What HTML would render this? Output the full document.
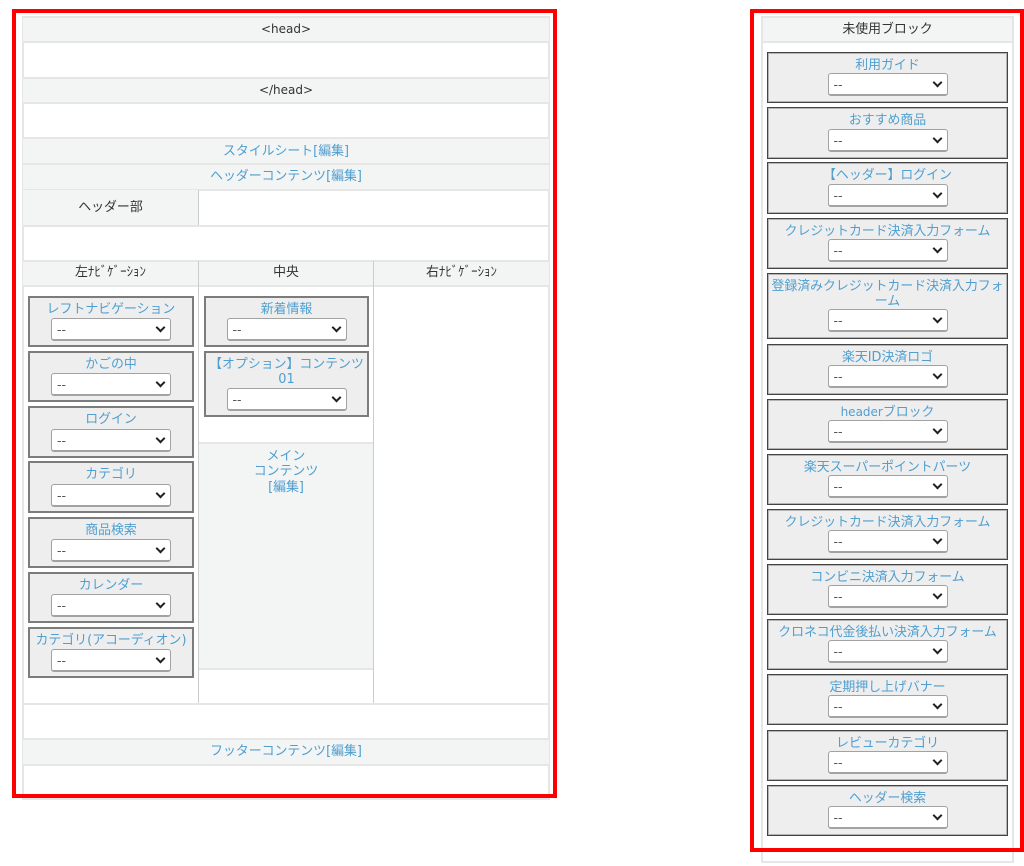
<!DOCTYPE html>
<html lang="ja"><head><meta charset="utf-8"><title>レイアウト</title>
<style>
html,body{margin:0;padding:0;background:#fff;width:1024px;height:866px;overflow:hidden}
body{position:relative;font:12.9px/15.4px "DejaVu Sans","Noto Sans CJK JP",sans-serif;color:#333;filter:blur(.3px)}
div{position:absolute;box-sizing:border-box}
.g{background:#f3f4f4;left:23px;width:526px;border-top:2px solid #e6e6e6;border-bottom:2px solid #e6e6e6;text-align:center}
a{color:#4f9fd0;text-decoration:none}
.v{width:1px;background:#ccc}
.h{height:2px;background:#e6e6e6}
.red{border:4px solid #f00}
.d{font-size:12px}
.b{background:#eee;border:2px solid #7c7c7c;text-align:center;line-height:15.4px;padding-top:4px}
.l{left:28px;width:166px}.c{left:204px;width:165px}.r{left:767px;width:241px;border:1px solid #444;box-shadow:inset 0 0 0 1px #b4b4b4;padding-top:5px}
.b a{display:block}
select{position:absolute;bottom:4px;left:50%;margin-left:-60px;width:120px;height:23px;font:12.5px "DejaVu Sans",sans-serif;background:#fff;color:#555;border:1px solid #a2a2a2;border-bottom-width:2px;border-radius:3px;padding:0 0 0 5px;appearance:none;-webkit-appearance:none}
.r select{bottom:6px}
.b::after{content:"";position:absolute;left:50%;margin-left:46px;bottom:14px;width:5px;height:5px;border-right:2px solid #222;border-bottom:2px solid #222;transform:rotate(45deg)}
.r::after{bottom:16px}
</style></head><body>

<div style="left:22px;top:16px;width:528px;height:784px;border:2px solid #e6e6e6;border-top-width:1px"></div>
<div class="g" style="top:16px;height:27px;line-height:23px"><span class="d">&lt;head&gt;</span></div>
<div class="g" style="top:77px;height:27px;line-height:22px"><span class="d">&lt;/head&gt;</span></div>
<div class="g" style="top:137px;height:28px;line-height:25px"><a>スタイルシート[編集]</a></div>
<div class="g" style="top:163px;height:28px;line-height:24px"><a>ヘッダーコンテンツ[編集]</a></div>
<div style="left:23px;top:190px;width:175px;height:35px;background:#f3f4f4;text-align:center;line-height:35px">ヘッダー部</div>
<div class="h" style="left:23px;top:225px;width:526px"></div>
<div class="v" style="left:198px;top:190px;height:35px"></div>
<div class="g" style="top:260px;height:27px"></div>
<div style="left:23px;top:262px;width:175px;text-align:center;line-height:22px">左ﾅﾋﾞｹﾞｰｼｮﾝ</div>
<div style="left:199px;top:262px;width:174px;text-align:center;line-height:22px">中央</div>
<div style="left:374px;top:262px;width:175px;text-align:center;line-height:22px">右ﾅﾋﾞｹﾞｰｼｮﾝ</div>
<div class="v" style="left:198px;top:261px;height:443px"></div>
<div class="v" style="left:373px;top:261px;height:443px"></div>
<div class="h" style="left:23px;top:703px;width:526px"></div>
<div class="g" style="top:738px;height:28px;line-height:24px"><a>フッターコンテンツ[編集]</a></div>

<div class="b l" style="top:296px;height:51px"><a>レフトナビゲーション</a><select><option>--</option></select></div>
<div class="b l" style="top:351px;height:51px"><a>かごの中</a><select><option>--</option></select></div>
<div class="b l" style="top:406px;height:52px"><a>ログイン</a><select><option>--</option></select></div>
<div class="b l" style="top:461px;height:52px"><a>カテゴリ</a><select><option>--</option></select></div>
<div class="b l" style="top:517px;height:51px"><a>商品検索</a><select><option>--</option></select></div>
<div class="b l" style="top:572px;height:51px"><a>カレンダー</a><select><option>--</option></select></div>
<div class="b l" style="top:627px;height:51px"><a>カテゴリ(アコーディオン)</a><select><option>--</option></select></div>

<div class="b c" style="top:296px;height:51px"><a>新着情報</a><select><option>--</option></select></div>
<div class="b c" style="top:351px;height:66px"><a>【オプション】コンテンツ<br>01</a><select><option>--</option></select></div>
<div style="left:199px;top:442px;width:174px;height:228px;background:#f3f4f4;border-top:2px solid #e6e6e6;border-bottom:2px solid #e6e6e6;text-align:center;padding-top:5px"><a>メイン<br>コンテンツ<br>[編集]</a></div>

<div style="left:761px;top:16px;width:253px;height:847px;border:2px solid #e6e6e6"></div>
<div style="left:763px;top:18px;width:249px;height:25px;background:#f3f4f4;border-bottom:2px solid #e6e6e6;text-align:center;line-height:23px">未使用ブロック</div>

<div class="b r" style="top:52px;height:51px"><a>利用ガイド</a><select><option>--</option></select></div>
<div class="b r" style="top:107px;height:52px"><a>おすすめ商品</a><select><option>--</option></select></div>
<div class="b r" style="top:162px;height:52px"><a>【ヘッダー】ログイン</a><select><option>--</option></select></div>
<div class="b r" style="top:218px;height:51px"><a>クレジットカード決済入力フォーム</a><select><option>--</option></select></div>
<div class="b r" style="top:273px;height:66px"><a>登録済みクレジットカード決済入力フォ<br>ーム</a><select><option>--</option></select></div>
<div class="b r" style="top:344px;height:51px"><a>楽天ID決済ロゴ</a><select><option>--</option></select></div>
<div class="b r" style="top:399px;height:51px"><a><span class="d">header</span>ブロック</a><select><option>--</option></select></div>
<div class="b r" style="top:454px;height:51px"><a>楽天スーパーポイントパーツ</a><select><option>--</option></select></div>
<div class="b r" style="top:509px;height:51px"><a>クレジットカード決済入力フォーム</a><select><option>--</option></select></div>
<div class="b r" style="top:564px;height:51px"><a>コンビニ決済入力フォーム</a><select><option>--</option></select></div>
<div class="b r" style="top:619px;height:51px"><a>クロネコ代金後払い決済入力フォーム</a><select><option>--</option></select></div>
<div class="b r" style="top:674px;height:51px"><a>定期押し上げバナー</a><select><option>--</option></select></div>
<div class="b r" style="top:730px;height:51px"><a>レビューカテゴリ</a><select><option>--</option></select></div>
<div class="b r" style="top:785px;height:51px"><a>ヘッダー検索</a><select><option>--</option></select></div>

<div class="red" style="left:12px;top:9px;width:545px;height:789px"></div>
<div class="red" style="left:750px;top:9px;width:274px;height:843px"></div>
</body></html>
